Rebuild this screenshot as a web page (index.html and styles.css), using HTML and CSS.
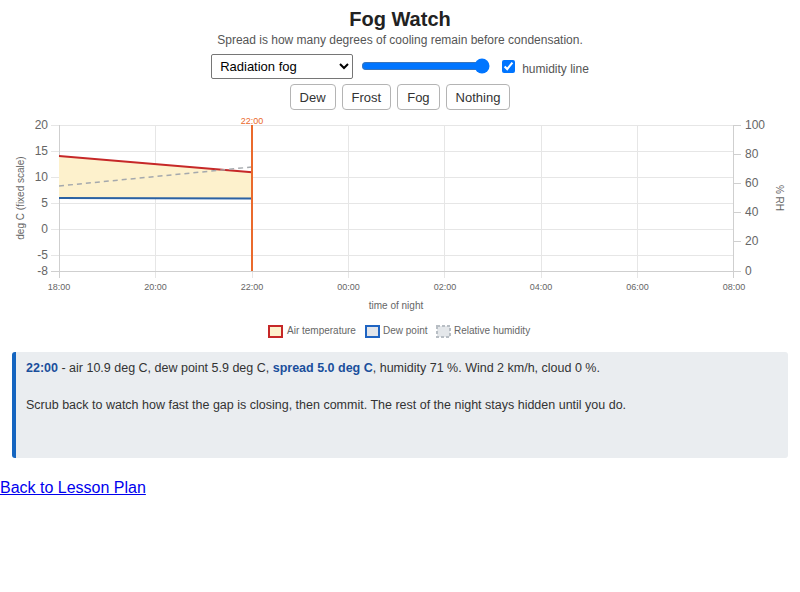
FILE: index.html
```html
<!DOCTYPE html>
<html lang="en">
  <head>
    <meta charset="UTF-8" />
    <meta name="viewport" content="width=device-width, initial-scale=1.0" />
    <title>Fog Watch</title>
    <link rel="stylesheet" href="styles.css">
  </head>
  <body>
    <div class="lesson">
      <h1>Fog Watch</h1>
      <p class="sub">Spread is how many degrees of cooling remain before condensation.</p>

      <div class="controls">
        <select class="scenario">
          <option>Radiation fog</option>
          <option>Frost hollow</option>
          <option>Cloudy night</option>
        </select>
        <input type="range" class="scrub" min="0" max="14" value="14">
        <label class="toggle"><input type="checkbox" checked> humidity line</label>
      </div>

      <div class="guesses">
        <button>Dew</button>
        <button>Frost</button>
        <button>Fog</button>
        <button>Nothing</button>
      </div>

      <svg class="chart" width="776" height="230" viewBox="12 115 776 230" xmlns="http://www.w3.org/2000/svg">
        <!-- horizontal grid, left scale -->
        <g stroke="#e6e6e6" stroke-width="1">
          <line x1="51" y1="125.5" x2="733" y2="125.5" />
          <line x1="51" y1="151.5" x2="733" y2="151.5" />
          <line x1="51" y1="177.5" x2="733" y2="177.5" />
          <line x1="51" y1="203.5" x2="733" y2="203.5" />
          <line x1="51" y1="229.5" x2="733" y2="229.5" />
          <line x1="51" y1="255.5" x2="733" y2="255.5" />
        </g>
        <!-- vertical grid, hours -->
        <g stroke="#e6e6e6" stroke-width="1">
          <line x1="155.5" y1="125" x2="155.5" y2="278" />
          <line x1="252.5" y1="125" x2="252.5" y2="278" />
          <line x1="348.5" y1="125" x2="348.5" y2="278" />
          <line x1="444.5" y1="125" x2="444.5" y2="278" />
          <line x1="541.5" y1="125" x2="541.5" y2="278" />
          <line x1="637.5" y1="125" x2="637.5" y2="278" />
        </g>
        <!-- axes -->
        <g stroke="#cfcfcf" stroke-width="1">
          <line x1="59.5" y1="125" x2="59.5" y2="278" />
          <line x1="733.5" y1="125" x2="733.5" y2="278" />
          <line x1="51" y1="271.5" x2="733" y2="271.5" />
          <line x1="733" y1="125.5" x2="741" y2="125.5" />
          <line x1="733" y1="154.5" x2="741" y2="154.5" />
          <line x1="733" y1="183.5" x2="741" y2="183.5" />
          <line x1="733" y1="212.5" x2="741" y2="212.5" />
          <line x1="733" y1="241.5" x2="741" y2="241.5" />
          <line x1="733" y1="271.5" x2="741" y2="271.5" />
        </g>

        <!-- left ticks, deg C -->
        <g class="tick" text-anchor="end">
          <text x="48" y="126">20</text>
          <text x="48" y="152">15</text>
          <text x="48" y="178">10</text>
          <text x="48" y="204">5</text>
          <text x="48" y="230">0</text>
          <text x="48" y="256">-5</text>
          <text x="48" y="272">-8</text>
        </g>
        <!-- right ticks, % RH -->
        <g class="tick">
          <text x="745" y="126">100</text>
          <text x="745" y="155">80</text>
          <text x="745" y="184">60</text>
          <text x="745" y="213">40</text>
          <text x="745" y="242">20</text>
          <text x="745" y="272">0</text>
        </g>
        <!-- hour labels -->
        <g class="hour" text-anchor="middle">
          <text x="59" y="288">18:00</text>
          <text x="155.5" y="288">20:00</text>
          <text x="252" y="288">22:00</text>
          <text x="348.5" y="288">00:00</text>
          <text x="445" y="288">02:00</text>
          <text x="541" y="288">04:00</text>
          <text x="637.5" y="288">06:00</text>
          <text x="734" y="288">08:00</text>
        </g>
        <text class="axis-title" x="396" y="306" text-anchor="middle">time of night</text>
        <text class="axis-title" x="21" y="198" text-anchor="middle" transform="rotate(-90 21 198)">deg C  (fixed scale)</text>
        <text class="axis-title" x="779" y="198" text-anchor="middle" transform="rotate(90 779 198)">% RH</text>

        <!-- spread band between air and dew point -->
        <polygon points="59,156 252,172.3 252,198.3 59,198" fill="#fdf1cc" />
        <line x1="59" y1="198" x2="252" y2="198.6" stroke="#2b62a3" stroke-width="2" />
        <line x1="59" y1="156" x2="252" y2="172.3" stroke="#c62828" stroke-width="2" />
        <line x1="59" y1="186" x2="252" y2="167" stroke="#a5a9ad" stroke-width="1.5" stroke-dasharray="5 4" />

        <!-- scrub marker -->
        <line x1="252" y1="125" x2="252" y2="271" stroke="#ea6a2c" stroke-width="2" />
        <text class="marker" x="252" y="124" text-anchor="middle">22:00</text>

        <!-- legend -->
        <rect x="269" y="326" width="13" height="11" fill="#fdf1cc" stroke="#c62828" stroke-width="2" />
        <text class="legend" x="287" y="331.5">Air temperature</text>
        <rect x="366" y="326" width="13" height="11" fill="#e2e5ea" stroke="#1f64c2" stroke-width="2" />
        <text class="legend" x="383" y="331.5">Dew point</text>
        <rect x="437" y="326" width="13" height="11" fill="#e4e7ea" stroke="#b8bec4" stroke-width="2" stroke-dasharray="3 2" />
        <text class="legend" x="454" y="331.5">Relative humidity</text>
      </svg>

      <div class="readout">
        <p><strong>22:00</strong> - air 10.9 deg C, dew point 5.9 deg C, <strong>spread 5.0 deg C</strong>, humidity 71 %. Wind 2 km/h, cloud 0 %.</p>
        <p>Scrub back to watch how fast the gap is closing, then commit. The rest of the night stays hidden until you do.</p>
      </div>
    </div>

    <div class="back"><a href="#">Back to Lesson Plan</a></div>
  </body>
</html>
```

FILE: styles.css
```css
body {
  margin: 0;
  font-family: "Liberation Sans", Arial, sans-serif;
  color: #222;
}
.lesson {
  padding: 7px 12px 0;
}
h1 {
  margin: 0;
  font-size: 20px;
  line-height: 24px;
  text-align: center;
}
.sub {
  margin: 2px 0 0;
  font-size: 12px;
  line-height: 14px;
  color: #555;
  text-align: center;
}
.controls {
  display: flex;
  justify-content: center;
  align-items: center;
  margin-top: 6px;
  height: 26px;
}
.scenario {
  width: 142px;
  height: 25px;
  font-family: "Liberation Sans", Arial, sans-serif;
  font-size: 13px;
  color: #000;
  background: #fff;
  border: 1px solid #767676;
  border-radius: 2px;
  padding: 0 4px;
}
.scrub {
  margin: 0 0 0 8px;
  width: 129px;
}
.toggle {
  display: flex;
  align-items: center;
  margin-left: 12px;
  font-size: 12px;
  color: #555;
  padding-top: 5px;
}
.toggle input {
  margin: -5px 7px 0 0;
}
.guesses {
  display: flex;
  justify-content: center;
  gap: 6px;
  margin-top: 5px;
}
button {
  height: 26px;
  padding: 0 9px;
  font-family: "Liberation Sans", Arial, sans-serif;
  font-size: 13px;
  color: #333;
  background: #fff;
  border: 1px solid #b4b4b4;
  border-radius: 4px;
  cursor: pointer;
}
button:hover {
  background: #f2f2f2;
}
.chart {
  display: block;
  margin-top: 5px;
  font-family: "Liberation Sans", Arial, sans-serif;
}
.tick {
  font-size: 12px;
  fill: #666;
  dominant-baseline: middle;
}
.hour {
  font-size: 9px;
  fill: #666;
  dominant-baseline: middle;
}
.axis-title {
  font-size: 10px;
  fill: #666;
  dominant-baseline: middle;
}
.marker {
  font-size: 9px;
  fill: #ea6a2c;
}
.legend {
  font-size: 10px;
  fill: #666;
  dominant-baseline: middle;
}
.readout {
  box-sizing: border-box;
  min-height: 106px;
  margin-top: 7px;
  padding: 7px 12px 8px 10px;
  background: #eaedf0;
  border-left: 4px solid #1565c0;
  border-radius: 3px;
  font-size: 12.5px;
  line-height: 18px;
  color: #333;
}
.readout p {
  margin: 0 0 19px;
}
.readout strong {
  color: #1a4f9c;
}
.back {
  margin-top: 21px;
  font-size: 16px;
  line-height: 18px;
}
.back a {
  color: #0000ee;
}
```
